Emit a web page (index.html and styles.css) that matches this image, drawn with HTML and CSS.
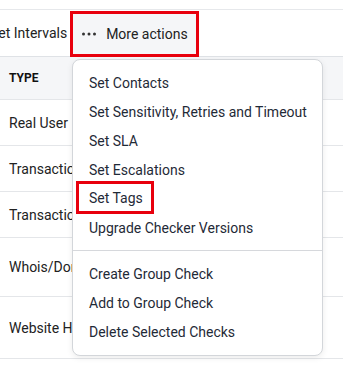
FILE: index.html
```html
<!DOCTYPE html>
<html lang="en">
<head>
    <meta charset="UTF-8">
    <meta name="viewport" content="width=device-width, initial-scale=1.0">
    <title>Checks</title>
    <link rel="stylesheet" href="styles.css">
</head>
<body>
    <div class="page">
        <div class="top-strip"></div>
        <div class="toolbar">
            <span class="tool">Set Intervals</span>
            <button class="more-btn">
                <svg class="dots" width="14" height="4" viewBox="0 0 14 4">
                    <circle cx="1.5" cy="2" r="1.5" fill="#333"/>
                    <circle cx="7" cy="2" r="1.5" fill="#333"/>
                    <circle cx="12.5" cy="2" r="1.5" fill="#333"/>
                </svg>
                <span>More actions</span>
            </button>
        </div>

        <div class="table">
            <div class="row head">TYPE</div>
            <div class="row">Real User Monitoring</div>
            <div class="row">Transaction</div>
            <div class="row">Transaction</div>
            <div class="row tall">Whois/Domain</div>
            <div class="row taller">Website Health</div>
        </div>

        <div class="menu">
            <div class="item">Set Contacts</div>
            <div class="item">Set Sensitivity, Retries and Timeout</div>
            <div class="item">Set SLA</div>
            <div class="item">Set Escalations</div>
            <div class="item"><span class="marked">Set Tags</span></div>
            <div class="item">Upgrade Checker Versions</div>
            <div class="divider"></div>
            <div class="item">Create Group Check</div>
            <div class="item">Add to Group Check</div>
            <div class="item">Delete Selected Checks</div>
        </div>
    </div>
</body>
</html>
```

FILE: styles.css
```css
* {
    margin: 0;
    padding: 0;
    box-sizing: border-box;
}
body {
    background: white;
    color: #222;
    font-family: Roboto, "Liberation Sans", sans-serif;
    font-size: 14px;
    overflow: hidden;
}
.page {
    position: relative;
    width: 343px;
    height: 369px;
}
.top-strip {
    height: 10px;
    border-bottom: 1px solid #e6e8eb;
}
.toolbar {
    display: flex;
    align-items: stretch;
    height: 47px;
    border-bottom: 1px solid #dfe2e6;
}
.tool {
    display: flex;
    align-items: center;
    margin-left: -10px; /* first letter is cut off by the viewport */
    margin-right: 3px;
    color: #222;
}
.more-btn {
    display: flex;
    align-items: center;
    gap: 10px;
    width: 129px;
    margin-top: 1px;
    margin-bottom: -1px; /* sits over the toolbar line */
    padding: 0 0 0 9px;
    background: #f5f6f8;
    border: 3px solid #e8000d;
    font-family: inherit;
    font-size: 14px;
    color: #222;
}
.dots {
    display: block;
}

/* table behind the menu */
.row {
    display: flex;
    align-items: center;
    height: 46px;
    padding-left: 9px;
    border-bottom: 1px solid #e4e6e9;
    white-space: nowrap;
}
.row.head {
    height: 43px;
    background: #f5f6f8;
    font-size: 12px;
    font-weight: 700;
    color: #111;
}
.row.tall {
    height: 59px;
}
.row.taller {
    height: 62px;
}

/* dropdown */
.menu {
    position: absolute;
    left: 72px;
    top: 59px;
    width: 251px;
    padding: 8px 0 9px;
    background: white;
    border: 1px solid #d3d6da;
    border-radius: 8px;
    box-shadow: 0 2px 6px rgba(0, 0, 0, 0.08);
}
.item {
    display: flex;
    align-items: center;
    height: 29px;
    padding-left: 16px;
    color: #1f2a37;
    white-space: nowrap;
}
.marked {
    margin-left: -13px;
    padding: 0 8px 0 10px;
    height: 33px;
    display: flex;
    align-items: center;
    border: 3px solid #e8000d;
    margin-top: -2px;
}
.divider {
    height: 1px;
    background: #d6d8dc;
    margin: 8px 0;
}
```
